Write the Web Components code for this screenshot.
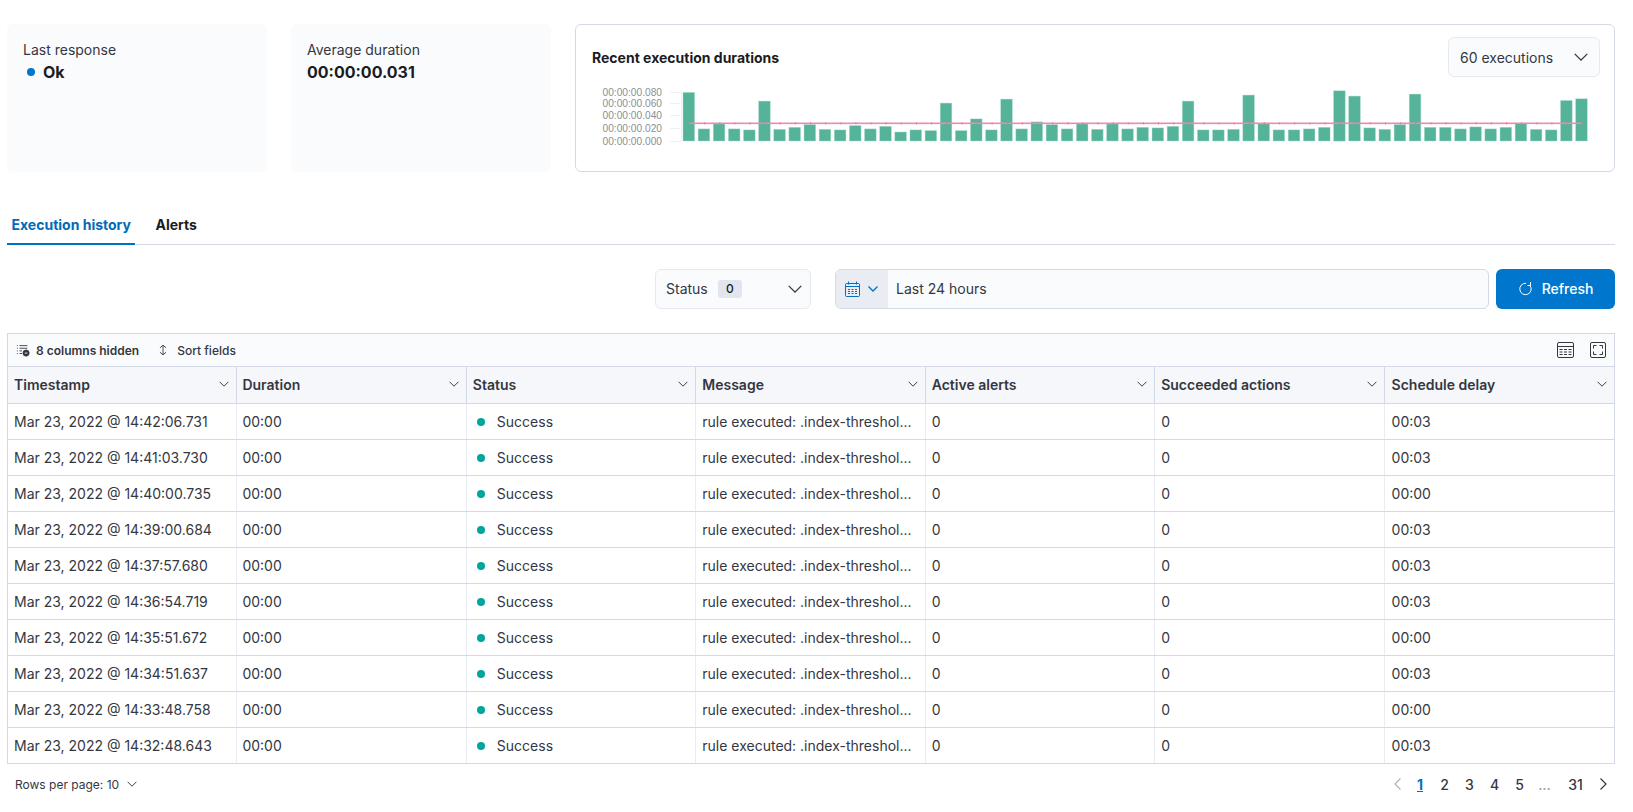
<!doctype html>
<html><head><meta charset="utf-8"><title>Rule details</title>
<style>
html,body{margin:0;padding:0;background:#fff}
body{font-family:Inter,"Liberation Sans",sans-serif;color:#343741;font-size:14px}
</style></head><body>
<rule-page></rule-page>
<script>
const chev=(s=16,c='#343741')=>`<svg width="${s}" height="${s}" viewBox="0 0 16 16" fill="none"><path d="M3 5.500l5 5 5-5" stroke="${c}" stroke-width="1.100"/></svg>`;
function def(name,css,html,extra){
  customElements.define(name,class extends HTMLElement{
    constructor(){super();const r=this.attachShadow({mode:'open'});
      r.innerHTML=`<style>${css}</style>`+(typeof html==='function'?html(this):html);}
    connectedCallback(){extra&&extra(this)}
  });
}
def('stat-card',`:host{display:block;width:260px;height:148px;box-sizing:border-box;background:#fafbfd;border-radius:6px;padding:17px 16px}
.l{font-size:14px;line-height:18px;color:#343741}
.v{font-size:16px;line-height:22px;font-weight:700;color:#1a1c21;display:flex;align-items:center;gap:8px;margin-top:2px}
i{display:block;width:8px;height:8px;border-radius:50%;background:#0077cc;margin-left:4px}`,
 h=>`<div class="l">${h.getAttribute('label')}</div><div class="v">${h.hasAttribute('dot')?'<i></i>':''}<span>${h.getAttribute('value')}</span></div>`);

const tops=[248,357,342,357,360,274,358,352,344,358,360,347,357,349,366,360,362,280,362,327,360,268,357,336,344,357,342,358,342,357,352,354,349,274,360,360,358,256,342,360,360,357,352,243,259,354,358,344,253,352,352,357,351,357,352,340,358,360,272,267];
function chartSvg(){
  const X=107,B=64,P=15.13;let s='';
  const labels=['00:00:00.080','00:00:00.060','00:00:00.040','00:00:00.020','00:00:00.000'],ys=[15,26,38,51,64];
  labels.forEach((t,i)=>{s+=`<text x="86" y="${ys[i]+3.500}" text-anchor="end" font-size="10.200" fill="#8a8f98">${t}</text><rect x="94" y="${ys[i]}" width="11" height="1" fill="#eef0f3"/>`});
  s+=`<rect x="105" y="14" width="1" height="51" fill="#f2f3f5"/>`;
  tops.forEach((t,i)=>{const h=(393-t)*0.335;s+=`<rect x="${(X+i*P).toFixed(2)}" y="${(B-h).toFixed(1)}" width="11.600" height="${h.toFixed(1)}" fill="#54b399" stroke="#a9dbcc" stroke-width=".6" stroke-opacity=".7"/>`});
  s+=`<rect x="${X+6}" y="45.500" width="${59*P}" height="1.600" fill="#ee89b4"/>`;
  for(let i=0;i<60;i++)s+=`<rect x="${(X+6+i*P).toFixed(1)}" y="45" width="1" height="2.600" fill="#e06c9f" opacity=".6"/>`;
  return `<svg width="1038" height="80" font-family="'Liberation Sans',Arial,sans-serif">${s}</svg>`;
}
def('chart-panel',`:host{display:block;flex:1;height:148px;box-sizing:border-box;background:#fff;border:1px solid #d3dae6;border-radius:6px}
.top{display:flex;justify-content:space-between;align-items:center;padding:12px 14px 0 16px;height:40px}
h3{margin:0;font-size:14px;font-weight:700;color:#1a1c21}
.sel{width:152px;height:40px;box-sizing:border-box;border:1px solid #e6e9f0;border-radius:6px;background:#fafbfd;display:flex;align-items:center;justify-content:space-between;padding:0 8px 0 11px;font-size:14px;color:#343741}
svg{display:block}.c{margin-top:0}`,
 ()=>`<div class="top"><h3>Recent execution durations</h3><div class="sel"><span>60 executions</span>${chev(20)}</div></div><div class="c">${chartSvg()}</div>`);

def('tab-bar',`:host{display:flex;border-bottom:1px solid #d3dae6;height:40px}
.t{padding:2px 4.500px 0;font-size:14px;line-height:38px;height:38px;color:#1a1c21;margin-right:15.500px;font-weight:700}
.a{color:#006bb8;box-shadow:inset 0 -2px 0 #0071c2;height:39px;line-height:38px}`,
 `<div class="t a">Execution history</div><div class="t">Alerts</div>`);

def('filter-bar',`:host{display:flex;justify-content:flex-end;gap:7px;height:40px}
.s{width:156px;box-sizing:border-box;border:1px solid #e6e9f0;border-radius:6px;background:#fafbfd;display:flex;align-items:center;padding:0 5px 0 10px;margin-right:17px;font-size:14px;color:#343741}
.s>span:first-child{margin-top:-2px}
.b{background:#e0e5ee;border-radius:3px;font-size:12px;font-weight:500;width:24px;height:18px;line-height:18px;text-align:center;margin-left:10px;color:#1a1c21}
.s svg{margin-left:auto}
.d{width:654px;box-sizing:border-box;border:1px solid #d3dae6;border-radius:6px;background:#fafbfd;display:flex;align-items:stretch;overflow:hidden;font-size:14px;color:#343741}
.q{width:52px;background:#e9edf3;display:flex;align-items:center;justify-content:flex-start;padding-left:9px;box-sizing:border-box;gap:7px}
.t{padding-left:8px;line-height:38px}
.r{width:119px;border-radius:6px;background:#0077cc;color:#fff;display:flex;align-items:center;justify-content:center;gap:8px;font-weight:500;font-size:14px}
.r span{margin-top:-2px}
svg{display:block}`,
 `<div class="s"><span>Status</span><span class="b">0</span>${chev(20)}</div>
 <div class="d"><div class="q"><svg width="15" height="16" viewBox="0 0 15 16" fill="none" stroke="#0071c2"><rect x=".5" y="2.500" width="14" height="13" rx="1"/><path d="M.5 5.500h14M3.500 .5v3M11.500 .5v3"/><path d="M3 8.500h2M6.500 8.500h2M10 8.500h2M3 10.500h2M6.500 10.500h2M10 10.500h2M3 12.500h2M6.500 12.500h2M10 12.500h2"/></svg><svg width="12" height="10" viewBox="0 0 12 10" fill="none"><path d="M1.500 2.500L6 7l4.500-4.500" stroke="#0071c2" stroke-width="1.300"/></svg></div><div class="t">Last 24 hours</div></div>
 <div class="r"><svg width="16" height="16" viewBox="0 0 16 16" fill="none" stroke="#fff"><path d="M12 4.500A5.700 5.700 0 1 1 8 2.300"/><path d="M12.500 1v3.500H9.500"/></svg><span>Refresh</span></div>`);

const rows=[['14:42:06.731','00:03'],['14:41:03.730','00:03'],['14:40:00.735','00:00'],['14:39:00.684','00:03'],['14:37:57.680','00:03'],['14:36:54.719','00:03'],['14:35:51.672','00:00'],['14:34:51.637','00:03'],['14:33:48.758','00:00'],['14:32:48.643','00:03']];
const heads=['Timestamp','Duration','Status','Message','Active alerts','Succeeded actions','Schedule delay'];
def('data-grid',`:host{display:block;border:1px solid #d3dae6;font-size:14px;color:#343741}
.tb{height:32px;background:#fafbfd;display:flex;align-items:center;font-size:12px;padding:0 8px;border-bottom:1px solid #d3dae6;color:#343741}
.tb b{font-weight:600;margin-left:6px}.tb .sf{display:flex;align-items:center;gap:8px;font-weight:500;margin-left:18px}.tb span.g{margin-left:auto;display:flex;gap:16px;margin-right:0}
.tb .h{display:flex;align-items:center}
.row{display:grid;grid-template-columns:repeat(7,1fr)}
.hd{height:36px;background:#f5f7fa;border-bottom:1px solid #d3dae6}
.hd>div{border-right:1px solid #d3dae6;display:flex;align-items:center;justify-content:space-between;padding:0 5px 2px 6px;font-weight:600;color:#343741}
.hd>div:last-child,.rw>div:last-child{border-right:0}
.hd>div:nth-child(2),.rw>div:nth-child(2){padding-left:5px}
.hd>div:last-child,.rw>div:last-child{padding-left:7px}
.rw{height:35px;border-bottom:1px solid #d3dae6}
.rw:last-child{border-bottom:0}
.rw>div{border-right:1px solid #e9edf3;padding-left:6px;line-height:35px;white-space:nowrap;overflow:hidden;color:#343741}
.st{display:flex;align-items:center}.st i{display:block;width:8px;height:8px;border-radius:50%;background:#00a69b;margin:0 12px 0 4px}`,
 `<div class="tb"><div class="h"><svg width="14" height="14" viewBox="0 0 16 16" fill="none" stroke="#343741"><path d="M1 3h1M4 3h9M1 6h1M4 6h9M1 9h1M4 9h3M1 12h1M4 12h3"/><circle cx="11.500" cy="11.500" r="3.500" fill="#343741"/><path d="M10 11.500h3" stroke="#fff"/></svg><b>8 columns hidden</b></div><div class="sf"><svg width="12" height="14" viewBox="0 0 12 16" fill="none" stroke="#343741"><path d="M6 2.500v11M2.500 5.500L6 2.500l3.500 3M2.500 10.500L6 13.500l3.500-3"/></svg><span>Sort fields</span></div>
 <span class="g"><svg width="17" height="16" viewBox="0 0 17 16" fill="none" stroke="#343741"><rect x=".5" y=".5" width="16" height="15" rx="1.500"/><path d="M.5 4.500h16"/><path d="M2.500 7.500h3M7 7.500h3M11.500 7.500h3M2.500 10h3M7 10h3M11.500 10h3M2.500 12.500h3M7 12.500h3M11.500 12.500h3"/></svg><svg width="16" height="16" viewBox="0 0 16 16" fill="none" stroke="#343741"><rect x=".5" y=".5" width="15" height="15" rx="1.500"/><path d="M3.500 6.500v-3h3M9.500 3.500h3v3M12.500 9.500v3h-3M6.500 12.500h-3v-3"/></svg></span></div>
 <div class="row hd">${heads.map(h=>`<div><span>${h}</span>${chev(14)}</div>`).join('')}</div>
 ${rows.map(r=>`<div class="row rw"><div>Mar 23, 2022 @ ${r[0]}</div><div>00:00</div><div class="st"><i></i><span>Success</span></div><div>rule executed: .index-threshol...</div><div>0</div><div>0</div><div>${r[1]}</div></div>`).join('')}`);

def('grid-pager',`:host{display:flex;justify-content:space-between;align-items:center;height:40px;font-size:14px;color:#343741}
.l{font-size:12px;display:flex;align-items:center;gap:6px;padding-left:8px;font-weight:400}
.p{display:flex;align-items:center;color:#343741;padding-right:4px}
.p span{display:block;width:25px;text-align:center;font-weight:500}
.p .on{color:#0071c2;font-weight:700;text-decoration:underline;width:24px}
.p .d{color:#98a2b3}
.p svg{display:block}`,
 `<div class="l"><span>Rows per page: 10</span>${chev(14)}</div>
 <div class="p"><svg width="16" height="16" viewBox="0 0 16 16" fill="none" style="margin-right:2.500px"><path d="M10.500 2.500L5 8l5.500 5.500" stroke="#a9b3c4" stroke-width="1.200"/></svg><span class="on">1</span><span>2</span><span>3</span><span>4</span><span>5</span><span class="d">...</span><span style="width:37px">31</span><svg width="16" height="16" viewBox="0 0 16 16" fill="none" style="margin-left:1px"><path d="M5.500 2.500L11 8l-5.500 5.500" stroke="#343741" stroke-width="1.200"/></svg></div>`);

def('rule-page',`:host{display:block;padding:24px 18px 0 7px;width:1633px;box-sizing:border-box;height:812px;overflow:hidden}
.top{display:flex;gap:24px}tab-bar{margin-top:32px}filter-bar{margin-top:24px;margin-bottom:24px}`,
 `<div class="top"><stat-card label="Last response" value="Ok" dot></stat-card><stat-card label="Average duration" value="00:00:00.031"></stat-card><chart-panel></chart-panel></div>
 <tab-bar></tab-bar><filter-bar></filter-bar><data-grid></data-grid><grid-pager></grid-pager>`);
</script>
</body></html>
